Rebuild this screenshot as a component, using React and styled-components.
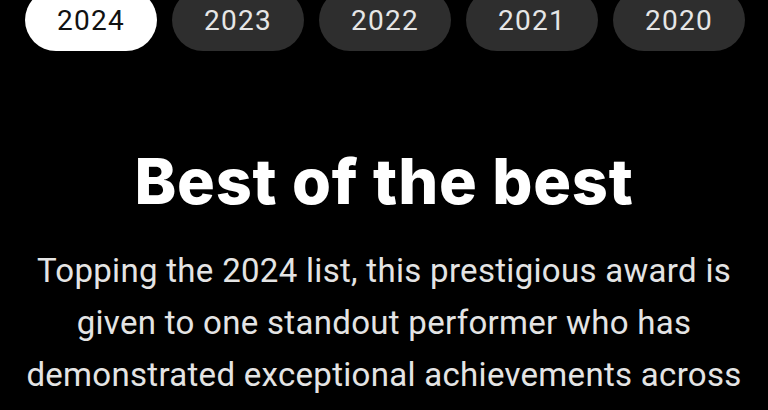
import React from "react";
import styled, { createGlobalStyle } from "styled-components";

const Global = createGlobalStyle`
  html, body { margin: 0; padding: 0; background: #000; }
  body { font-family: Roboto, "Liberation Sans", sans-serif; overflow: hidden; }
`;

const Page = styled.div`
  width: 768px;
  height: 410px;
  background: #000;
  display: flex;
  flex-direction: column;
  align-items: center;
  overflow: hidden;
`;

const Tabs = styled.div`
  display: flex;
  gap: 15px;
  margin-top: -11px;
  padding-left: 25px;
  align-self: flex-start;
`;

const Tab = styled.button`
  width: 132px;
  height: 62px;
  border: none;
  border-radius: 31px;
  padding: 0;
  background: ${(p) => (p.$active ? "#ffffff" : "#2e2e2e")};
  color: ${(p) => (p.$active ? "#111" : "#e6e6e6")};
  font-family: Roboto, "Liberation Sans", sans-serif;
  font-size: 28px;
  font-weight: 400;
  letter-spacing: 1.3px;
  display: flex;
  align-items: center;
  justify-content: center;
`;

const Title = styled.h1`
  margin: 93px 0 0;
  font-family: Inter, "Open Sans", sans-serif;
  font-weight: 800;
  font-size: 63px;
  line-height: 74px;
  letter-spacing: 0.8px;
  color: #fff;
  text-align: center;
`;

const Body = styled.p`
  margin: 27px 0 0;
  width: 760px;
  font-family: Roboto, "Liberation Sans", sans-serif;
  font-size: 33px;
  line-height: 52px;
  letter-spacing: 0.3px;
  color: #e4e4e4;
  text-align: center;
`;

const years = ["2024", "2023", "2022", "2021", "2020"];

export default function App() {
  return (
    <>
      <Global />
      <Page>
        <Tabs>
          {years.map((y, i) => (
            <Tab key={y} $active={i === 0}>
              {y}
            </Tab>
          ))}
        </Tabs>
        <Title>Best of the best</Title>
        <Body>
          Topping the 2024 list, this prestigious award is given to one standout
          performer who has demonstrated exceptional achievements across
        </Body>
      </Page>
    </>
  );
}
